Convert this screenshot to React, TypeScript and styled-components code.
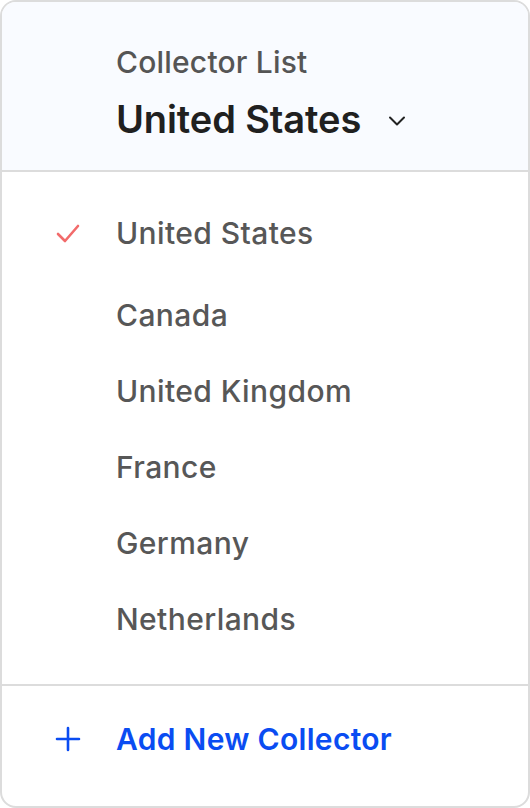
import React from 'react'
import styled, { createGlobalStyle } from 'styled-components'

const GlobalStyle = createGlobalStyle`
  html, body {
    margin: 0;
    padding: 0;
    background: #ffffff;
  }
  body {
    font-family: Inter, 'Noto Sans', sans-serif;
  }
`

const Card = styled.div`
  box-sizing: border-box;
  width: 530px;
  height: 808px;
  border: 2px solid #dcdcdc;
  border-radius: 16px;
  overflow: hidden;
  display: flex;
  flex-direction: column;
  background: #ffffff;
`

const Header = styled.div`
  height: 170px;
  box-sizing: border-box;
  background: #f9fbff;
  border-bottom: 2px solid #dcdcdc;
  padding: 42px 0 0 114px;
`

const Label = styled.div`
  font-size: 30px;
  font-weight: 500;
  color: #555555;
  letter-spacing: 0.2px;
  line-height: 36px;
`

const Selected = styled.div`
  display: flex;
  align-items: center;
  margin-top: 16px;
  font-size: 38px;
  font-weight: 600;
  color: #202020;
  letter-spacing: -0.1px;
  line-height: 46px;
`

const Chevron = styled.svg`
  margin-left: 27px;
  margin-top: 4px;
`

const List = styled.ul`
  list-style: none;
  margin: 0;
  padding: 41px 0 0;
  flex: 1;
  border-bottom: 2px solid #dcdcdc;
`

const Item = styled.li<{ first?: boolean }>`
  display: flex;
  align-items: center;
  height: 40px;
  margin-bottom: ${({ first }) => (first ? '42px' : '36px')};
  font-size: 30px;
  font-weight: 500;
  color: #575757;
  letter-spacing: 0.4px;
`

const IconSlot = styled.span`
  width: 114px;
  display: flex;
  padding-left: 53px;
  box-sizing: border-box;
`

const Footer = styled.button`
  height: 120px;
  box-sizing: border-box;
  padding: 0 0 14px;
  display: flex;
  align-items: center;
  border: none;
  background: none;
  font-family: inherit;
  font-size: 30px;
  font-weight: 600;
  color: #0a4cf2;
  letter-spacing: 0.3px;
  cursor: pointer;
`

const countries = [
  'United States',
  'Canada',
  'United Kingdom',
  'France',
  'Germany',
  'Netherlands',
]

export default function App() {
  return (
    <>
      <GlobalStyle />
      <Card>
        <Header>
          <Label>Collector List</Label>
          <Selected>
            United States
            <Chevron width="18" height="10" viewBox="0 0 18 10" fill="none">
              <path d="M2 1.5l7 7 7-7" stroke="#222" strokeWidth="2" strokeLinecap="round" strokeLinejoin="round" />
            </Chevron>
          </Selected>
        </Header>
        <List>
          {countries.map((c, i) => (
            <Item key={c} first={i === 0}>
              <IconSlot>
                {i === 0 && (
                  <svg width="26" height="22" viewBox="0 0 26 22" fill="none">
                    <path d="M3 12l7 7L23 4" stroke="#f26b6b" strokeWidth="2.6" strokeLinecap="round" strokeLinejoin="round" />
                  </svg>
                )}
              </IconSlot>
              {c}
            </Item>
          ))}
        </List>
        <Footer>
          <IconSlot>
            <svg width="26" height="26" viewBox="0 0 26 26" fill="none">
              <path d="M13 2v22M2 13h22" stroke="#0a4cf2" strokeWidth="2.6" strokeLinecap="round" />
            </svg>
          </IconSlot>
          Add New Collector
        </Footer>
      </Card>
    </>
  )
}
